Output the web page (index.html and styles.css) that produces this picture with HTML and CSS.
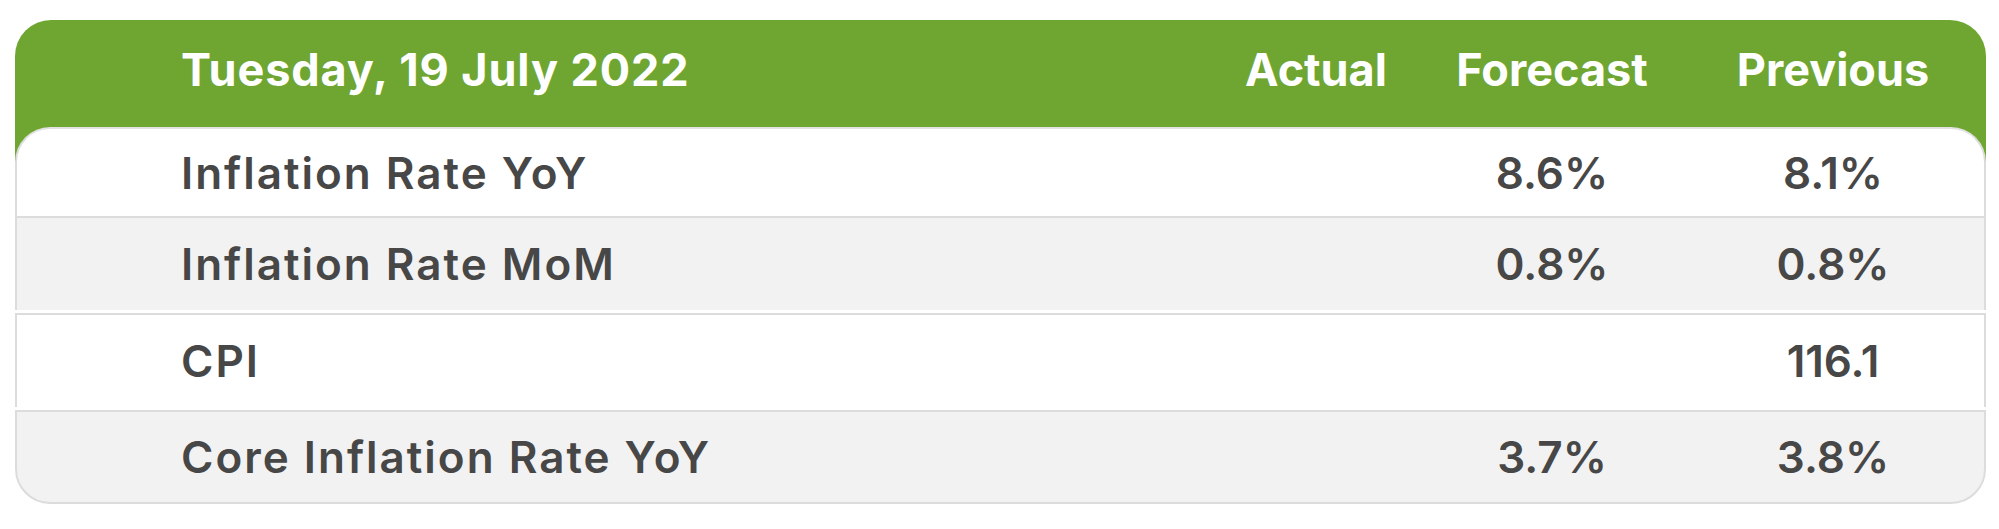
FILE: index.html
```html
<!DOCTYPE html>
<html lang="en">
<head>
<meta charset="utf-8">
<title>Economic calendar</title>
<link rel="stylesheet" href="styles.css">
</head>
<body>
<div class="card">
  <div class="row head">
    <div class="label">Tuesday, 19 July 2022</div>
    <div class="val">Actual</div>
    <div class="val">Forecast</div>
    <div class="val prev">Previous</div>
  </div>
  <div class="row r1">
    <div class="label">Inflation Rate YoY</div>
    <div class="val"></div>
    <div class="val">8.6%</div>
    <div class="val prev">8.1%</div>
  </div>
  <div class="row r2">
    <div class="label">Inflation Rate MoM</div>
    <div class="val"></div>
    <div class="val">0.8%</div>
    <div class="val prev">0.8%</div>
  </div>
  <div class="row r3">
    <div class="label">CPI</div>
    <div class="val"></div>
    <div class="val"></div>
    <div class="val prev">116.1</div>
  </div>
  <div class="row r4">
    <div class="label">Core Inflation Rate YoY</div>
    <div class="val"></div>
    <div class="val">3.7%</div>
    <div class="val prev">3.8%</div>
  </div>
</div>
</body>
</html>
```

FILE: styles.css
```css
html, body {
  margin: 0;
  padding: 0;
  background: #ffffff;
}

body {
  font-family: "Inter", "Open Sans", sans-serif;
}

.card {
  margin: 20px 0 0 15px;
  width: 1971px;
  border-radius: 36px;
  background: linear-gradient(to bottom, #6fa632 0, #6fa632 160px, transparent 160px);
  display: flex;
  flex-direction: column;
}

.row {
  display: grid;
  grid-template-columns: 1181px 236px 236px 1fr;
  align-items: center;
  box-sizing: border-box;
  border-left: 2px solid #dcdcdc;
  border-right: 2px solid #dcdcdc;
  color: #474747;
  font-size: 44px;
  font-weight: 600;
}

.label {
  padding-left: 164px;
  letter-spacing: 2px;
}

.val {
  text-align: center;
}

.prev {
  padding-left: 12px;
}

.head {
  height: 107px;
  border-color: transparent;
  color: #ffffff;
  font-weight: 700;
  font-size: 45px;
  padding-bottom: 8px;
}

.head .label {
  letter-spacing: 0.9px;
}

.r1 {
  height: 91px;
  background: #ffffff;
  border-radius: 35px 35px 0 0;
  border-top: 2px solid #e2e2e2;
  border-bottom: 2px solid #dcdcdc;
}

.r2 {
  height: 92px;
  background: #f2f2f2;
}

.r3 {
  margin-top: 3px;
  height: 94px;
  background: #ffffff;
  border-top: 2px solid #dcdcdc;
}

.r4 {
  margin-top: 3px;
  height: 94px;
  background: #f2f2f2;
  border-top: 2px solid #dcdcdc;
  border-bottom: 2px solid #dcdcdc;
  border-radius: 0 0 35px 35px;
}
```
